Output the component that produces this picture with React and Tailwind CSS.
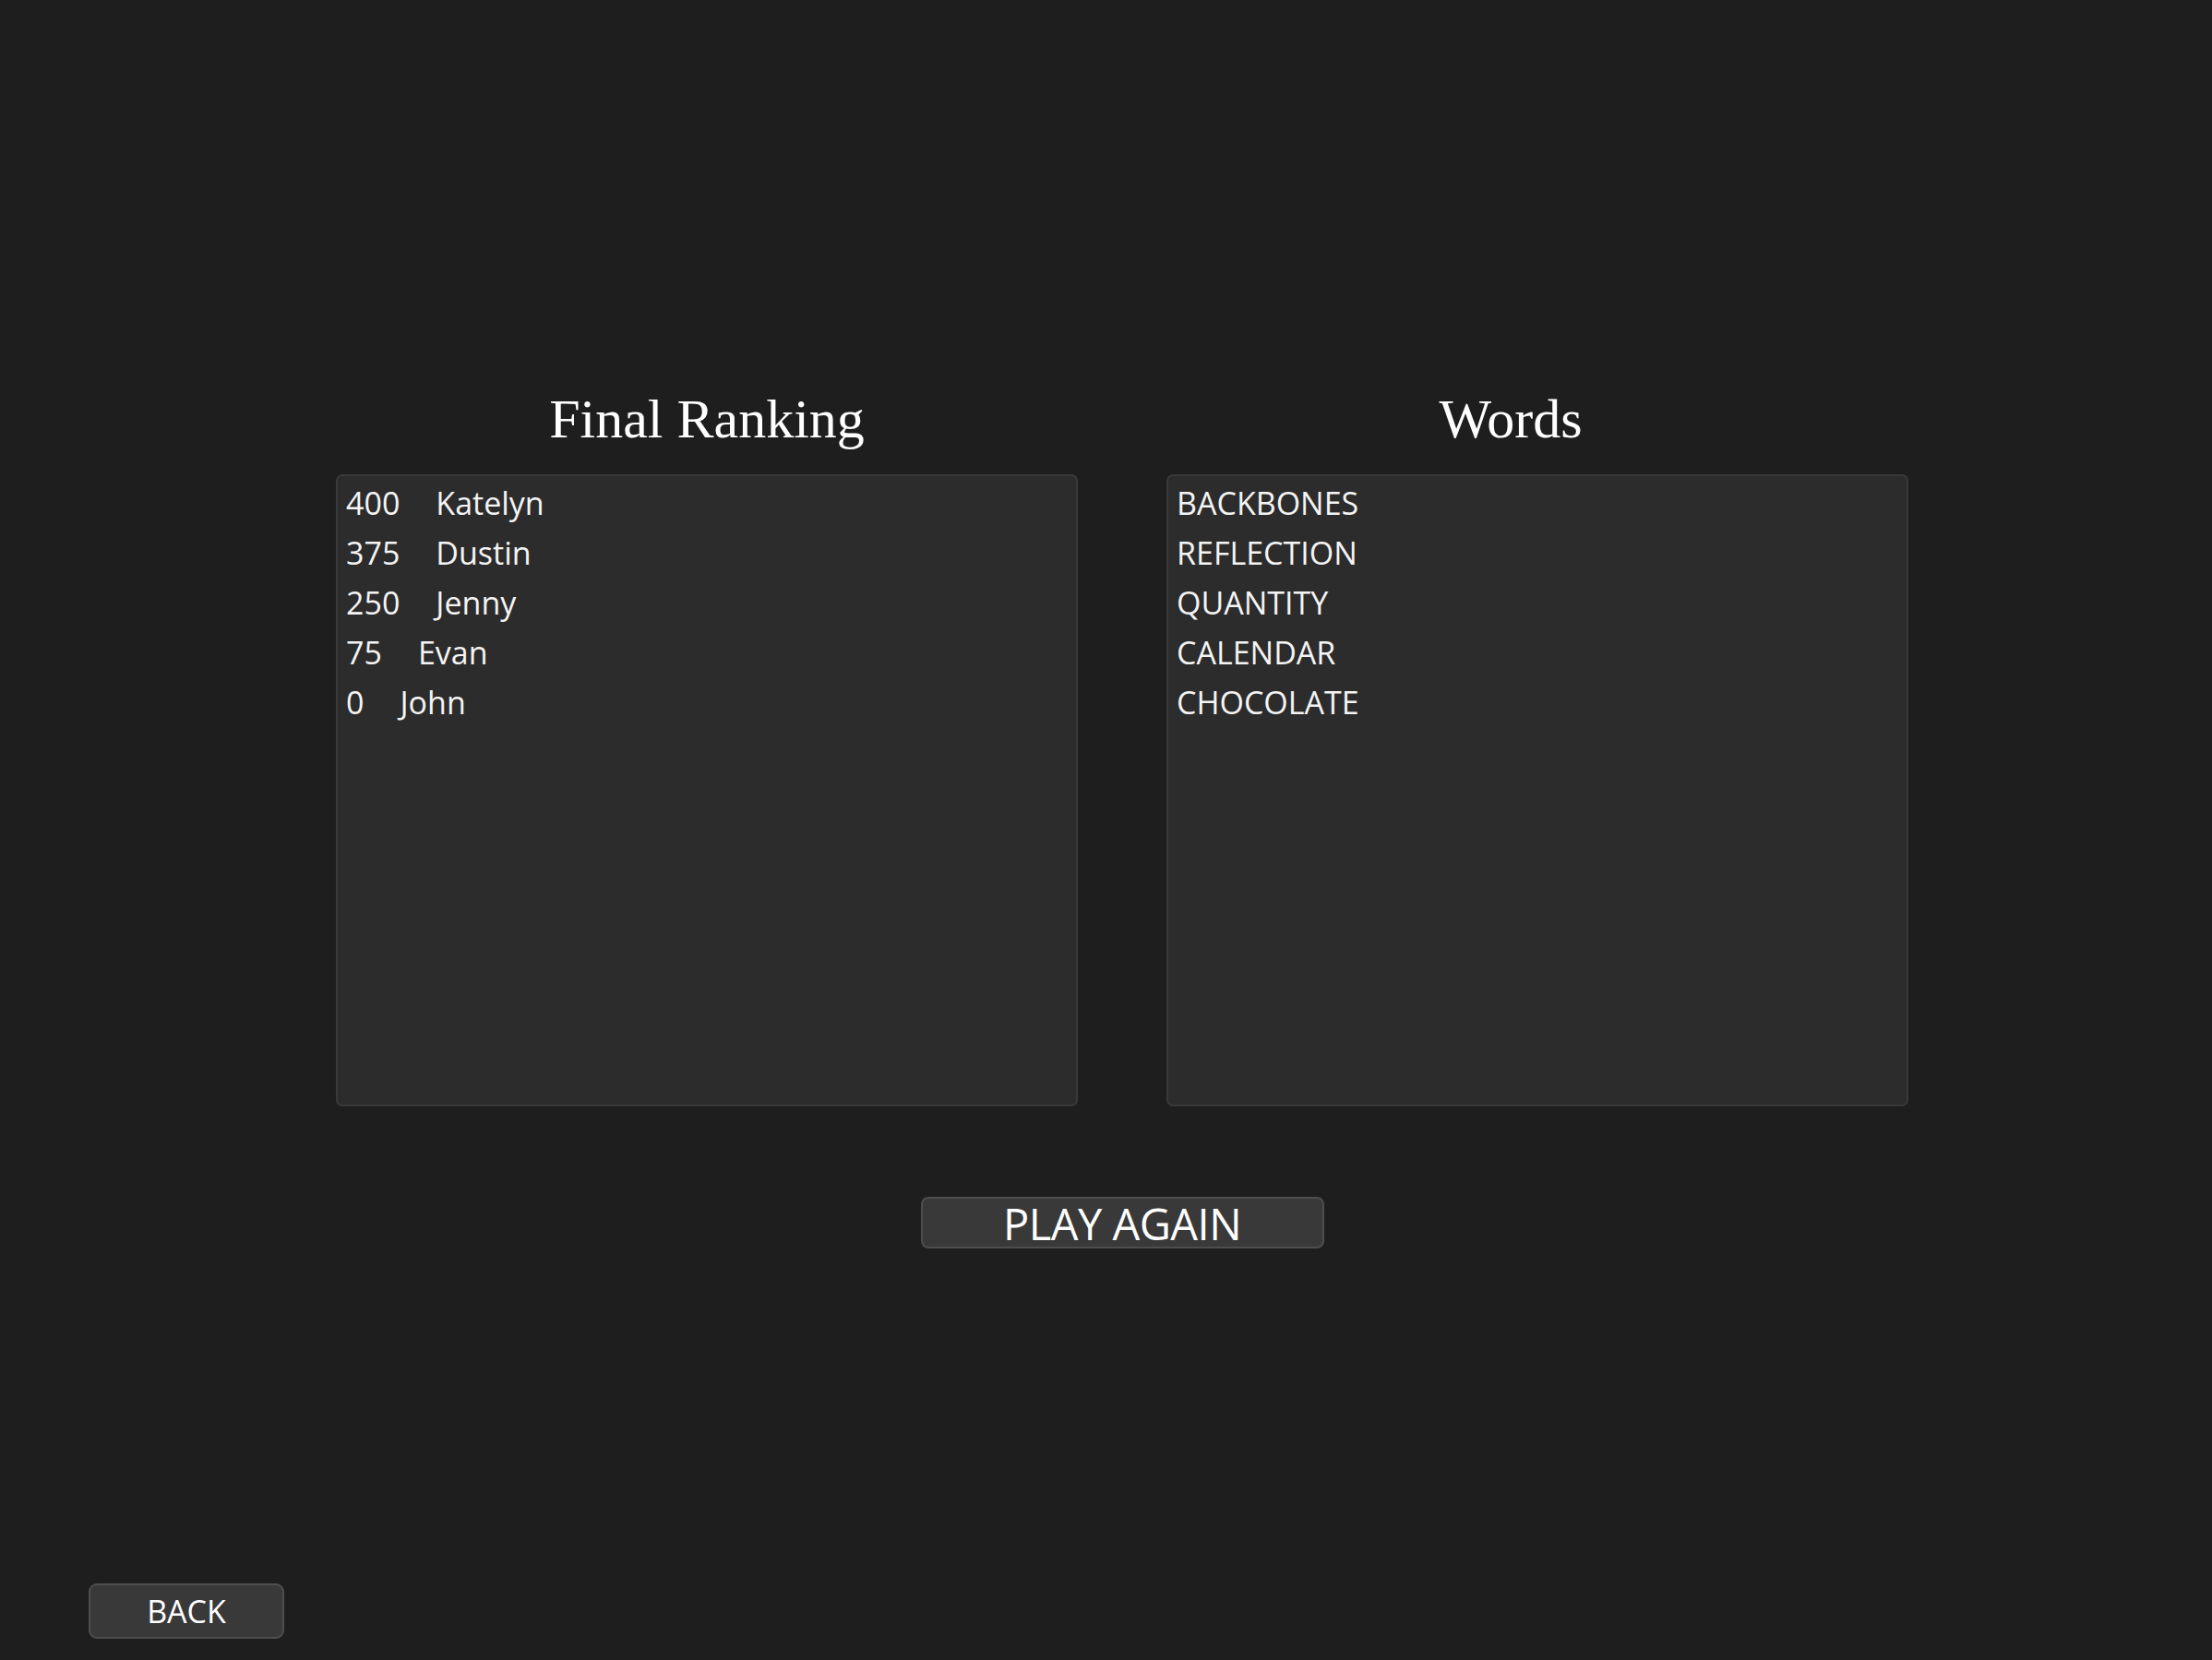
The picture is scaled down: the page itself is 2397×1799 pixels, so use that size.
import React from 'react';

const ranking = [
    { score: 400, name: 'Katelyn' },
    { score: 375, name: 'Dustin' },
    { score: 250, name: 'Jenny' },
    { score: 75, name: 'Evan' },
    { score: 0, name: 'John' },
];

const words = ['BACKBONES', 'REFLECTION', 'QUANTITY', 'CALENDAR', 'CHOCOLATE'];

const Panel = ({ children }) => (
    <div className="h-[685px] w-[804px] rounded-[7px] border-2 border-[#393939] bg-[#2c2c2c] pl-[9px] pt-[2px]">
        {children}
    </div>
);

const App = () => {
    return (
        <div className="flex h-screen flex-col bg-[#1e1e1e] font-['Open_Sans',sans-serif] text-[#f4f4f4]">
            <div className="w-[2068px] pl-[364px] pt-[424px]">
                <div className="flex gap-[96px]">
                    {/* Final ranking */}
                    <div className="flex flex-col">
                        <h2 className="mb-[30px] text-center font-['Liberation_Serif',serif] text-[60px] leading-[60px] font-normal text-white">
                            Final Ranking
                        </h2>
                        <Panel>
                            {ranking.map((row) => (
                                <div key={row.name} className="flex gap-[39px] text-[34px] leading-[54px]">
                                    <span>{row.score}</span>
                                    <span>{row.name}</span>
                                </div>
                            ))}
                        </Panel>
                    </div>

                    {/* Words */}
                    <div className="flex flex-col">
                        <h2 className="mb-[30px] pr-[58px] text-center font-['Liberation_Serif',serif] text-[60px] leading-[60px] font-normal text-white">
                            Words
                        </h2>
                        <Panel>
                            {words.map((w) => (
                                <div key={w} className="text-[34px] leading-[54px]">
                                    {w}
                                </div>
                            ))}
                        </Panel>
                    </div>
                </div>

                <div className="mt-[98px] flex justify-center">
                    <button className="flex h-[56px] w-[437px] items-center justify-center rounded-[8px] border-2 border-[#4e4e4e] bg-[#393939] pt-[2px] text-[47px] leading-none tracking-[-0.5px] text-white">
                        PLAY AGAIN
                    </button>
                </div>
            </div>

            <div className="flex-1" />

            <div className="pb-[23px] pl-[96px]">
                <button className="flex h-[60px] w-[212px] items-center justify-center rounded-[9px] border-2 border-[#4e4e4e] bg-[#393939] text-[34px] leading-none text-white">
                    BACK
                </button>
            </div>
        </div>
    );
};

export default App;
